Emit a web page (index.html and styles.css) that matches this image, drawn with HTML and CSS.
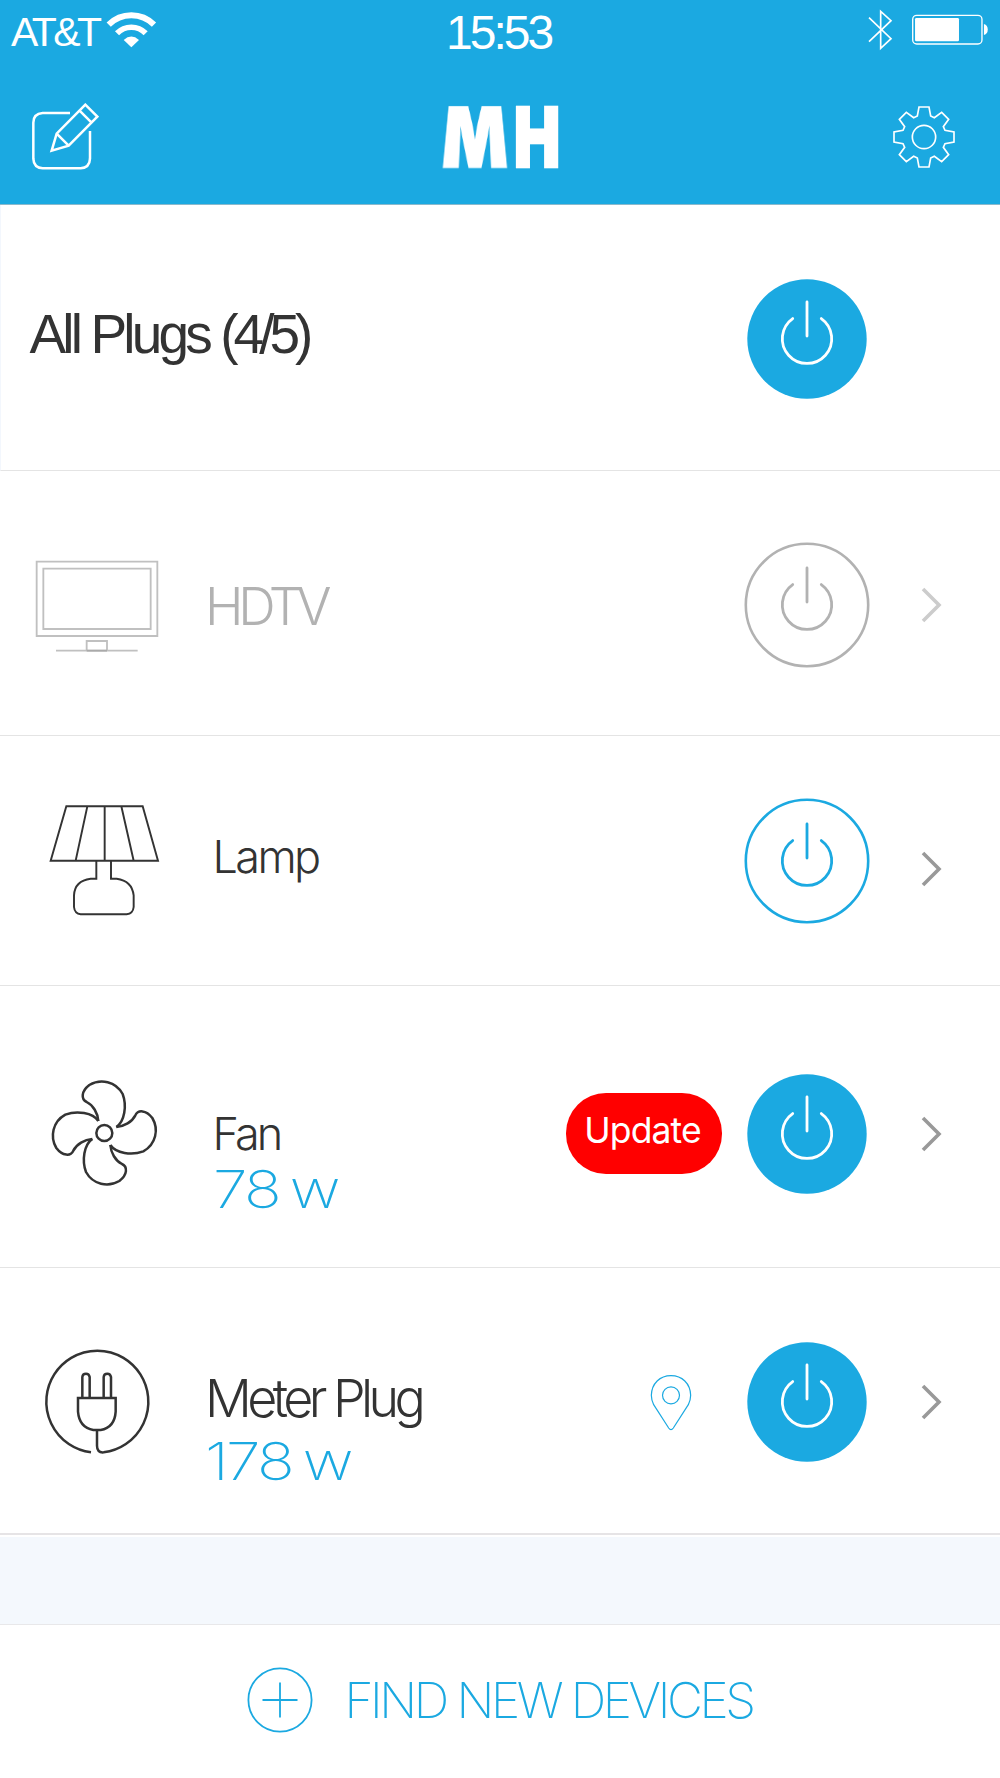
FILE: index.html
```html
<!DOCTYPE html>
<html lang="en">
<head>
<meta charset="utf-8">
<title>MH Plugs</title>
<link rel="stylesheet" href="styles.css">
</head>
<body>
<svg class="defs" width="0" height="0" aria-hidden="true">
  <defs>
    <g id="power">
      <path d="M-14.3 -20.4 A24.7 24.7 0 1 0 14.3 -20.4M0 -37V-3" fill="none" stroke-width="2.8" stroke-linecap="round"/>
    </g>
    <path id="blade" d="M295 214C293 190 280 167 260 157C243 149 243 125 268 106C302 86 347 95 368 133C381 168 374 215 349 232"/>
    <path id="chevron" d="M2 2L18 18L2 34" fill="none" stroke-width="3.6"/>
  </defs>
</svg>
<div class="app">
  <header class="top">
    <div class="status">
      <div class="carrier">
        <span class="carrier-name">AT&amp;T</span>
        <svg class="wifi" viewBox="318 34 152 112" width="50.7" height="37.3">
          <path d="M326 75A96 96 0 0 1 462 75" fill="none" stroke="#fff" stroke-width="18"/>
          <path d="M351 101A60 60 0 0 1 437 101" fill="none" stroke="#fff" stroke-width="17"/>
          <path d="M371 121Q394 100 417 121L394 143Z" fill="#fff"/>
        </svg>
      </div>
      <span class="clock">15:53</span>
      <div class="indicators">
        <svg viewBox="1104 27 74 126" width="24.7" height="42" fill="none" stroke="#fff" stroke-width="5"><path d="M1107 53L1173 116L1142 145V34L1173 62L1107 125"/></svg>
        <svg viewBox="1236 42 234 94" width="78" height="31.3">
          <rect x="1238" y="46" width="208" height="86" rx="12" fill="none" stroke="#fff" stroke-width="4"/>
          <rect x="1245" y="54" width="132" height="70" rx="4" fill="#fff"/>
          <path d="M1452 72A15 17 0 0 1 1452 105Z" fill="#fff"/>
        </svg>
      </div>
    </div>
    <nav class="nav">
      <svg class="edit" viewBox="93 309 204 204" width="68" height="68" fill="none" stroke="#fff" stroke-width="7.5">
        <path d="M210 339H128Q100 341 100 368V476Q101 503 128 505H242Q269 503 270 476V393"/>
        <path d="M155 452L170 401L256 314L292 350L206 437ZM170 401L206 437M238 331L274 367"/>
      </svg>
      <h1 class="logo"><span class="logo-m">M</span><span class="logo-h">H</span></h1>
      <svg class="gear" viewBox="-93 -93 186 186" width="62" height="62" fill="none" stroke="#fff" stroke-width="5">
        <path d="M-15-90L15-90L20-63L31-58L53-74L74-53L58-31L63-20L90-15L90 15L63 20L58 31L74 53L53 74L31 58L20 63L15 90L-15 90L-20 63L-31 58L-53 74L-74 53L-58 31L-63 20L-90 15L-90-15L-63-20L-58-31L-74-53L-53-74L-31-58L-20-63Z"/>
        <circle r="35"/>
      </svg>
    </nav>
  </header>
  <main>
    <section class="row row-all">
      <h2 class="name name-all">All Plugs <span class="count">(4/5)</span></h2>
      <svg class="power on" viewBox="-63 -63 126 126" width="126" height="126"><circle r="59.7"/><use href="#power"/></svg>
    </section>
    <section class="row row-tv">
      <svg class="icon" viewBox="90 80 390 300" width="130" height="100" fill="none" stroke="#c0c0c0" stroke-width="5.5">
        <path d="M110 94H472V317H110ZM130 115H452V296H130ZM260 332H321V361H260ZM168 361H413"/>
        <path d="M260 361H321" stroke="#aaa"/>
      </svg>
      <div class="label"><span class="name name-tv">HDTV</span></div>
      <svg class="power off" viewBox="-63 -63 126 126" width="126" height="126"><circle r="61.2"/><use href="#power"/></svg>
      <svg class="chevron faint" viewBox="0 0 22 36" width="22" height="36"><use href="#chevron"/></svg>
    </section>
    <section class="row row-lamp">
      <svg class="icon" viewBox="90 70 390 342" width="130" height="114" fill="none" stroke="#333" stroke-width="5.8">
        <path d="M199 80H428L474 243H152ZM262 80L227 243M314 80V243M364 80L401 243"/>
        <path d="M289 243V297H272Q224 303 222 347V382Q224 402 242 404H380Q399 402 401 382V347Q396 303 350 297H333V243"/>
      </svg>
      <div class="label"><span class="name name-lamp">Lamp</span></div>
      <svg class="power idle" viewBox="-63 -63 126 126" width="126" height="126"><circle r="61.2"/><use href="#power"/></svg>
      <svg class="chevron" viewBox="0 0 22 36" width="22" height="36"><use href="#chevron"/></svg>
    </section>
    <section class="row row-fan">
      <svg class="icon" viewBox="90 85 390 330" width="130" height="110" fill="none" stroke="#333" stroke-width="7.5" stroke-linejoin="round">
        <use href="#blade"/>
        <use href="#blade" transform="rotate(90 313 250)"/>
        <use href="#blade" transform="rotate(180 313 250)"/>
        <use href="#blade" transform="rotate(270 313 250)"/>
        <circle cx="313" cy="250" r="24"/>
      </svg>
      <div class="label"><span class="name name-fan">Fan</span><span class="watts watts-fan">78 w</span></div>
      <button class="update"><span>Update</span></button>
      <svg class="power on" viewBox="-63 -63 126 126" width="126" height="126"><circle r="59.7"/><use href="#power"/></svg>
      <svg class="chevron" viewBox="0 0 22 36" width="22" height="36"><use href="#chevron"/></svg>
    </section>
    <section class="row row-meter">
      <svg class="icon" viewBox="90 85 390 324" width="130" height="108" fill="none" stroke="#333" stroke-width="7.5">
        <path d="M273 398A153 153 0 1 1 311 398Q291 400 291 378V331"/>
        <path d="M234 235H347V276Q344 324 302 331H280Q238 324 234 276ZM247 235V172Q248 162 258 162Q267 162 269 172V235M311 235V172Q312 162 322 162Q331 162 333 172V235"/>
      </svg>
      <div class="label"><span class="name name-meter">Meter Plug</span><span class="watts watts-meter">178 w</span></div>
      <svg class="pin" viewBox="90 160 126 171" width="42" height="57" fill="none" stroke="#1ba9e1" stroke-width="3.6">
        <path d="M101 252Q94 238 94 224C95 188 120 165 153 165S211 188 212 224Q212 238 205 252L160 322Q153 332 146 322Z"/>
        <circle cx="153" cy="224" r="25.5"/>
      </svg>
      <svg class="power on" viewBox="-63 -63 126 126" width="126" height="126"><circle r="59.7"/><use href="#power"/></svg>
      <svg class="chevron" viewBox="0 0 22 36" width="22" height="36"><use href="#chevron"/></svg>
    </section>
    <div class="band"></div>
  </main>
  <footer class="find">
    <svg viewBox="-33 -33 66 66" width="66" height="66" fill="none" stroke="#1ba9e1" stroke-width="1.8"><circle r="31.6"/><path d="M-17.5 0H17.5M0-17.5V17.5"/></svg>
    <span class="find-text">FIND NEW DEVICES</span>
  </footer>
</div>
</body>
</html>
```
FILE: styles.css
```css
* { box-sizing: border-box; margin: 0; padding: 0; }
body { background: #fff; font-family: Inter, "Liberation Sans", sans-serif; color: #333; }
svg { display: block; flex: none; }
.defs { position: absolute; }
.app { width: 1000px; height: 1778px; display: flex; flex-direction: column; overflow: hidden; }

.top { height: 205px; background: #1ba9e1; color: #fff; border-bottom: 1px solid #8ab9cc; }
.status { height: 60px; display: grid; grid-template-columns: 446px 1fr auto; padding-right: 10px; }
.carrier { display: flex; padding-left: 11px; }
.carrier-name { font: 41px/41px "Liberation Sans", sans-serif; letter-spacing: -3.6px; width: 95px; margin-top: 12px; white-space: nowrap; }
.wifi { margin-top: 11.3px; }
.clock { font: 48px/48px "Liberation Sans", sans-serif; letter-spacing: -3px; margin-top: 9px; }
.indicators { display: flex; gap: 19.3px; }
.indicators svg:first-child { margin-top: 9px; }
.indicators svg:last-child { margin-top: 14px; }
.nav { display: flex; align-items: flex-start; padding: 43px 45px 0 31px; }
.gear { margin: 2.7px 0 0 auto; }
.logo { display: flex; font: 900 82.5px/84px Inter, sans-serif; height: 84px; margin: -8px 0 0 345px; -webkit-text-stroke: 1.6px #fff; }
.logo-m, .logo-h { width: 62px; display: flex; justify-content: center; transform-origin: 50% 72px; }
/* Splays the legs of the M: narrower at the cap line than at the baseline. */
.logo-m { transform: matrix3d(.88,0,0,0, 0,1.22,0,-.00357, 0,0,1,0, 0,0,0,1); }
.logo-h { transform: scaleX(.745); -webkit-text-stroke-width: 2.6px; }

.row { display: flex; align-items: flex-start; border-bottom: 1px solid #e4e4e4; padding-right: 57px; }
.row-all { height: 266px; padding-left: 28.5px; padding-right: 130.5px; border-left: 1px solid #f3f7fd; }
.row-tv { height: 265px; }
.row-lamp { height: 250px; }
.row-fan { height: 282px; }
.row-meter { height: 267px; border-bottom: 2px solid #e6e4e6; }
.icon { margin-left: 30px; }
.row-tv .icon { margin-top: 86px; }
.row-lamp .icon { margin-top: 67.3px; }
.row-fan .icon { margin-top: 92.4px; }
.row-meter .icon { margin-top: 80.3px; }

.label { flex: 1; display: flex; flex-direction: column; padding-left: 45px; }
.row-lamp .label, .row-fan .label { padding-left: 52.5px; }
.name, .watts { display: block; white-space: nowrap; transform-origin: 0 0; }
.name { font-weight: 300; }
.name-all { flex: 1; font: 400 55px/55px "Liberation Sans", sans-serif; letter-spacing: -3.85px; margin-top: 102px; }
.count { letter-spacing: -5px; }
.name-tv { color: #b2b2b2; font-size: 52px; line-height: 52px; letter-spacing: -5.2px; margin-top: 110px; }
.name-lamp { font-size: 45px; line-height: 45px; letter-spacing: -2.6px; margin-top: 98px; }
.name-fan { font-size: 45px; line-height: 45px; letter-spacing: -3px; margin-top: 125px; }
.name-meter { font-size: 52px; line-height: 52px; letter-spacing: -4.6px; margin-top: 105px; }
.watts { font-size: 52px; line-height: 52px; font-weight: 200; color: #1ba9e1; transform: scaleX(1.2); letter-spacing: -2.2px; word-spacing: -3.6px; }
.watts-fan { margin-top: 8px; }
.watts-meter { margin-top: 11px; }

.power { stroke: #fff; fill: none; }
.power circle { stroke-width: 2.6; }
.on circle { fill: #1ba9e1; stroke: none; }
.idle { stroke: #1ba9e1; }
.off { stroke: #b2b2b2; }
.row-all .power { margin-top: 71px; }
.row-tv .power { margin-top: 70.5px; }
.row-lamp .power { margin-top: 62px; }
.row-fan .power { margin-top: 84.5px; }
.row-meter .power { margin-top: 71px; }
.chevron { stroke: #999; margin-left: 51.5px; }
.faint { stroke: #ccc; }
.row-tv .chevron { margin-top: 115.5px; }
.row-lamp .chevron { margin-top: 115px; }
.row-fan .chevron { margin-top: 129.5px; }
.row-meter .chevron { margin-top: 116px; }

.update { width: 156px; height: 81px; margin: 107px 22px 0 0; border: 0; border-radius: 40px; background: #f00; color: #fff; font: 400 35.5px/36px Inter, sans-serif; letter-spacing: -.9px; padding: 0 8px 6px 6px; }
.pin { margin: 106.3px 51.5px 0 0; }

.band { height: 89px; border-top: 2px solid #fff; background: #f4f8fd; }
.find { flex: 1; border-top: 1px solid #e8e8ea; display: flex; align-items: flex-start; padding: 42px 0 0 246.5px; color: #1ba9e1; }
.find-text { font-size: 49.5px; line-height: 50px; font-weight: 200; letter-spacing: -3.4px; margin: 7.5px 0 0 32px; white-space: nowrap; }
```
